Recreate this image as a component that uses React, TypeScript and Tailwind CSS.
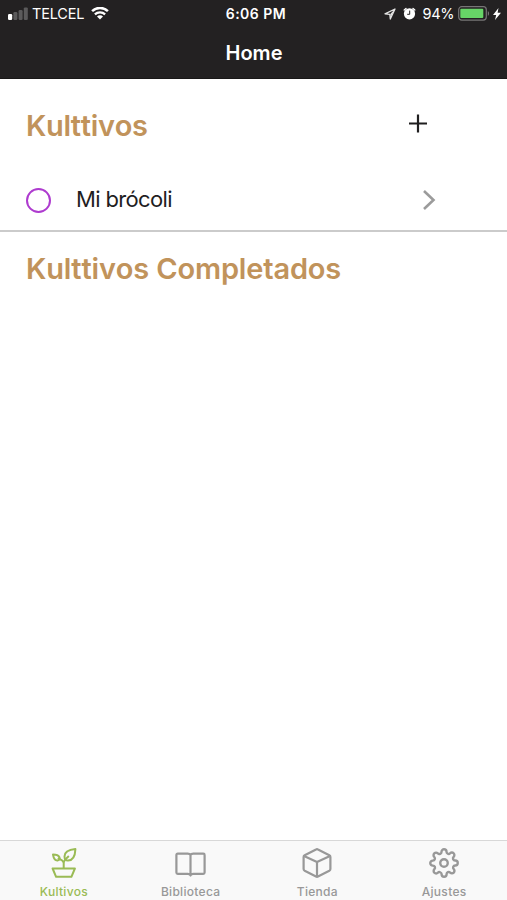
import type { ReactNode } from 'react'
import { FiSettings } from 'react-icons/fi'

interface TabItem {
  label: string
  icon: ReactNode
  active?: boolean
}

function SignalIcon() {
  return (
    <svg className="h-[14px] w-5" viewBox="0 0 20 14" aria-hidden="true">
      <rect x="0" y="7" width="4.2" height="6" rx="1.2" fill="#fff" />
      <rect x="5.4" y="5" width="4" height="8" rx="1.2" fill="#5b5a5b" />
      <rect x="10.6" y="3" width="4" height="10" rx="1.2" fill="#5b5a5b" />
      <rect x="15.8" y="0.4" width="4" height="12.6" rx="1.2" fill="#5b5a5b" />
    </svg>
  )
}

function WifiIcon() {
  return (
    <svg className="h-[13px] w-[18px]" viewBox="0 0 18 13" fill="none" stroke="#fff" aria-hidden="true">
      <path d="M1.1 4.2a11.2 11.2 0 0 1 15.8 0" strokeWidth="2.5" />
      <path d="M3.9 7.4a7.2 7.2 0 0 1 10.2 0" strokeWidth="2.2" />
      <path d="M9 12.6 6 9.5a4.2 4.2 0 0 1 6 0Z" fill="#fff" stroke="none" />
    </svg>
  )
}

function LocationIcon() {
  return (
    <svg className="h-3 w-3" viewBox="0 0 12 12" fill="none" stroke="#e4e4e4" aria-hidden="true">
      <path d="M11 1 1 5.8l4.8.5L6.3 11Z" strokeWidth="1.3" strokeLinejoin="round" />
      <path d="M11 1 6.6 9.5 6.3 6Z" fill="#e4e4e4" stroke="none" />
    </svg>
  )
}

function AlarmIcon() {
  return (
    <svg className="h-[14px] w-[13px]" viewBox="0 0 13 14" aria-hidden="true">
      <circle cx="6.5" cy="6.8" r="5.6" fill="#fff" />
      <path d="M1.2 3 3 1.4M11.8 3 10 1.4" stroke="#fff" strokeWidth="1.4" strokeLinecap="round" />
      <path d="M6.7 3.6v3.7H4.2" fill="none" stroke="#232122" strokeWidth="1" />
    </svg>
  )
}

function BatteryIcon() {
  return (
    <svg className="h-[15px] w-8" viewBox="0 0 32 15" aria-hidden="true">
      <rect x="0.7" y="0.7" width="27.6" height="13.4" rx="3" fill="none" stroke="#777576" strokeWidth="1.2" />
      <rect x="2.3" y="2.7" width="23" height="9.4" rx="1" fill="#67d567" />
      <path d="M29.8 5.2c1.7.5 1.7 4 0 4.5Z" fill="#777576" />
    </svg>
  )
}

function BoltIcon() {
  return (
    <svg className="h-3 w-2" viewBox="0 0 8 12" aria-hidden="true">
      <path d="M5.5 0 0 7h3.2L2 12l6-7.3H4.6Z" fill="#fff" />
    </svg>
  )
}

function PlantIcon() {
  return (
    <svg
      className="h-[30px] w-[30px]"
      viewBox="0 0 30 30"
      fill="none"
      stroke="currentColor"
      strokeWidth="2"
      strokeLinejoin="round"
      aria-hidden="true"
    >
      <path d="M4.6 20.5h22.3l-3.5 8.3H8.1Z" />
      <path d="M15.7 20.5v-6c.2-2.1 1.5-3.2 5.1-6.5" />
      <path d="M27.4 1.1c-6.6.7-10.9 3-10.9 7.3 0 2.7 1.5 4.3 3.5 4.2 4.9-.2 7.1-4.1 7.4-11.5Z" />
      <path d="M5 6.6c.7 4.3 2 6.2 4.9 5.8 1.6-.4 2.2-1.8 1.5-3.2C10.5 7.5 8.3 6.7 5 6.6Z" />
      <path d="M9.8 10.2c2.5 1.3 5.3 2.2 5.9 4.3" />
    </svg>
  )
}

function BookIcon() {
  return (
    <svg
      className="h-[30px] w-8"
      viewBox="0 0 32 30"
      fill="none"
      stroke="currentColor"
      strokeWidth="2.2"
      strokeLinejoin="round"
      strokeLinecap="round"
      aria-hidden="true"
    >
      <path d="M16.5 6.8c-.5-.8-1.3-1.2-2.7-1.2H3.7c-.8 0-1.3.5-1.3 1.3v17.6c0 .8.5 1.3 1.3 1.3h10.1c1.4 0 2.3.5 2.7 1.7.4-1.2 1.3-1.7 2.7-1.7h10.1c.8 0 1.3-.5 1.3-1.3V6.9c0-.8-.5-1.3-1.3-1.3H19.2c-1.4 0-2.2.4-2.7 1.2Zm0 0v20" />
    </svg>
  )
}

function BoxIcon() {
  return (
    <svg
      className="h-[30px] w-[30px]"
      viewBox="0 0 30 30"
      fill="none"
      stroke="currentColor"
      strokeWidth="2.2"
      strokeLinejoin="round"
      aria-hidden="true"
    >
      <path d="M14 1.5q1-.6 2 0L27.3 7.2q1.1.6 1.1 1.7v12.2q0 1.100-1.100 1.700L16 28.500q-1 .6-2 0L2.700 22.800q-1.100-.6-1.100-1.700V8.900q0-1.100 1.100-1.700Z" />
      <path d="M2 8 15 14l13-6M15 14v14.8" />
    </svg>
  )
}

const tabs: TabItem[] = [
  { label: 'Kultivos', icon: <PlantIcon />, active: true },
  { label: 'Biblioteca', icon: <BookIcon /> },
  { label: 'Tienda', icon: <BoxIcon /> },
  { label: 'Ajustes', icon: <FiSettings className="h-[30px] w-[30px]" strokeWidth={1.9} aria-hidden="true" /> },
]

function StatusBar() {
  return (
    <div className="grid h-[27px] grid-cols-[1fr_auto_1fr] items-center pl-2 pr-[6px] text-white">
      <div className="flex items-center">
        <SignalIcon />
        <span className="ml-1 mr-[7px] text-[14.5px] tracking-[-0.2px]">TELCEL</span>
        <WifiIcon />
      </div>
      <span className="ml-[3px] text-[14px] font-semibold tracking-[0.5px]">6:06 PM</span>
      <div className="flex items-center justify-end">
        <LocationIcon />
        <span className="mx-[7px]">
          <AlarmIcon />
        </span>
        <span className="mr-1 text-[14.5px] tracking-[-0.4px]">94%</span>
        <BatteryIcon />
        <span className="ml-[3px]">
          <BoltIcon />
        </span>
      </div>
    </div>
  )
}

export default function App() {
  return (
    <div className="flex h-screen flex-col bg-white font-['Inter',sans-serif] text-[#1f1e1f]">
      <header className="h-[79px] shrink-0 border-b border-[#191818] bg-[#232122]">
        <StatusBar />
        <h1 className="pt-[11px] pl-px text-center text-[20px] leading-[30px] font-semibold text-white">Home</h1>
      </header>

      <main className="flex-1">
        <section>
          <div className="flex h-[90px] items-center justify-between pl-[26px] pr-[79px]">
            <h2 className="pt-[3px] text-[29px] leading-9 font-semibold tracking-[-0.3px] text-[#c1935b] [font-kerning:none]">
              Kulttivos
            </h2>
            <button type="button" aria-label="Añadir">
              <svg className="h-5 w-5" viewBox="0 0 20 20" stroke="#1f1e1f" strokeWidth="2.2" aria-hidden="true">
                <path d="M1 9.5h18M10 .5v18" />
              </svg>
            </button>
          </div>
          <div className="flex h-[63px] items-center border-b-2 border-[#cbcbcb] pl-[26px] pr-[71px]">
            <span className="mt-[2px] h-[25px] w-[25px] rounded-full border-2 border-[#ae3bcf]" />
            <span className="ml-[25px] flex-1 pb-[2px] text-[22px] leading-7 tracking-[-0.65px]">Mi brócoli</span>
            <svg className="h-5 w-[14px]" viewBox="0 0 14 20" fill="none" stroke="#9b9b9b" strokeWidth="2.6" aria-hidden="true">
              <path d="m2 1 9.5 9L2 19" />
            </svg>
          </div>
        </section>
        <section className="pl-[26px] pt-[19px]">
          <h2 className="text-[29px] leading-9 font-semibold tracking-[-0.15px] text-[#c1935b] [font-kerning:none]">
            Kulttivos Completados
          </h2>
        </section>
      </main>

      <nav className="grid h-[60px] shrink-0 grid-cols-4 border-t border-[#d8d8d8] bg-[#f9f9f9]">
        {tabs.map((tab) => (
          <button
            key={tab.label}
            type="button"
            className={`flex flex-col items-center pt-[7px] ${tab.active ? 'text-[#9abb55]' : 'text-[#989898]'}`}
          >
            {tab.icon}
            <span className="mt-[6px] ml-px text-[12px] leading-4 font-medium tracking-[0.3px]">{tab.label}</span>
          </button>
        ))}
      </nav>
    </div>
  )
}
